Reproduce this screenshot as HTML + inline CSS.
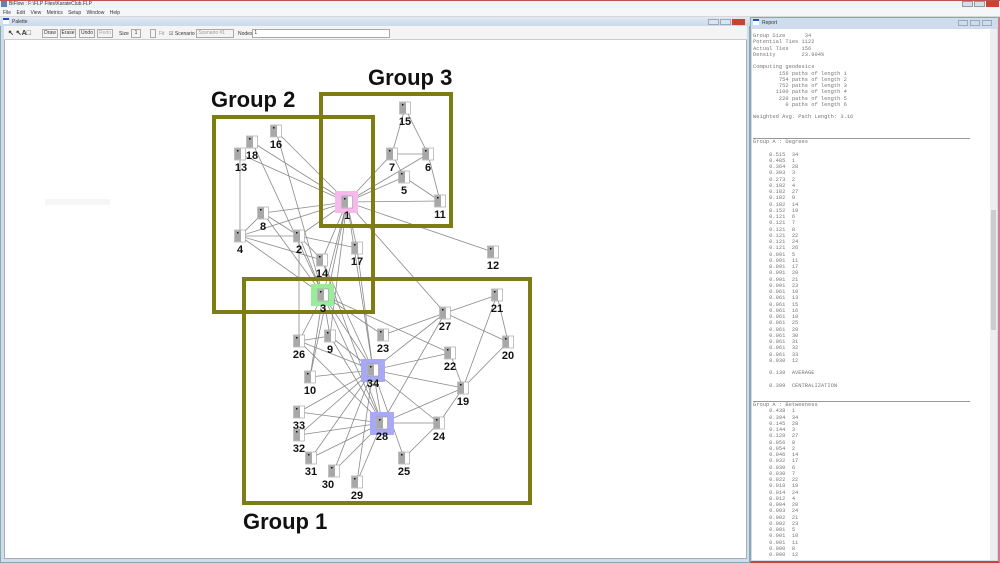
<!DOCTYPE html>
<html><head><meta charset="utf-8"><style>
*{margin:0;padding:0;box-sizing:border-box}
body{width:1000px;height:563px;overflow:hidden;background:#fff;font-family:"Liberation Sans",sans-serif;position:relative}
.abs{position:absolute}
pre{font-family:"Liberation Mono",monospace;font-size:5.4px;line-height:6.25px;color:#777;position:absolute}
.tb{font-size:5px;color:#333}
.btn{position:absolute;top:29px;height:9px;border:1px solid #aaa;background:#f4f4f4;font-size:5px;line-height:7px;text-align:center;color:#333}
</style></head><body>
<div class="abs" style="left:0;top:0;width:1000px;height:8px;background:#f0f2f6;border-top:1px solid #c05050"></div>
<div class="abs" style="left:1px;top:1px;width:6px;height:6px;background:#6a7fb0"></div>
<div class="abs tb" style="left:9px;top:1px">BiFlow : F:\FLP Files\KarateClub.FLP</div>
<div class="abs" style="left:962px;top:1px;width:11px;height:6px;background:#d8dde8;border:1px solid #999"></div>
<div class="abs" style="left:974px;top:1px;width:11px;height:6px;background:#d8dde8;border:1px solid #999"></div>
<div class="abs" style="left:986px;top:1px;width:13px;height:6px;background:#d04030"></div>
<div class="abs" style="left:0;top:8px;width:1000px;height:9px;background:#f5f6f8;border-bottom:1px solid #d8d8d8"></div>
<div class="abs tb" style="left:3px;top:10px;word-spacing:4px">File Edit View Metrics Setup Window Help</div>
<div class="abs" style="left:0;top:17px;width:750px;height:546px;background:#cfdcee;border:1px solid #8aa"></div>
<div class="abs" style="left:0;top:17px;width:750px;height:9px;background:linear-gradient(#dfe8f4,#cbd9ec)"></div>
<div class="abs" style="left:3px;top:18px;width:6px;height:6px;background:#fff;border-top:2px solid #2050c0"></div>
<div class="abs tb" style="left:12px;top:19px">Palette</div>
<div class="abs" style="left:708px;top:19px;width:11px;height:6px;background:#dbe3ee;border:1px solid #9ab"></div>
<div class="abs" style="left:720px;top:19px;width:11px;height:6px;background:#dbe3ee;border:1px solid #9ab"></div>
<div class="abs" style="left:732px;top:19px;width:13px;height:6px;background:#d04030"></div>
<div class="abs" style="left:4px;top:26px;width:743px;height:533px;background:#fff;border:1px solid #aab"></div>
<div class="abs" style="left:4px;top:26px;width:743px;height:14px;background:#f4f4f4;border-bottom:1px solid #ccc"></div>
<div class="abs tb" style="left:8px;top:29px;font-size:7px;font-weight:bold">&#x2196; &#x2196;A&#x25A1;</div>
<div class="btn" style="left:42px;width:16px">Draw</div>
<div class="btn" style="left:60px;width:16px">Erase</div>
<div class="btn" style="left:79px;width:16px">Undo</div>
<div class="btn" style="left:97px;width:16px;color:#aaa">Redo</div>
<div class="abs tb" style="left:119px;top:31px">Size</div>
<div class="btn" style="left:131px;width:10px">1</div>
<div class="btn" style="left:150px;width:6px"></div>
<div class="abs tb" style="left:159px;top:31px;color:#999">Fit</div>
<div class="abs tb" style="left:169px;top:31px">&#x2611; Scenario</div>
<div class="btn" style="left:196px;width:38px;text-align:left;color:#999">&nbsp;Scenario #1</div>
<div class="abs tb" style="left:238px;top:31px">Nodes</div>
<div class="btn" style="left:252px;width:138px;background:#fff;text-align:left">&nbsp;1</div>
<div class="abs" style="left:45px;top:199px;width:65px;height:6px;background:#f6f6f6"></div>
<svg class="abs" style="left:0;top:0" width="750" height="563">
<g stroke="#8a8a8a" stroke-width="0.8">
<line x1="405" y1="108" x2="392" y2="154"/><line x1="405" y1="108" x2="428" y2="154"/><line x1="392" y1="154" x2="428" y2="154"/><line x1="392" y1="154" x2="404" y2="177"/><line x1="428" y1="154" x2="440" y2="201"/><line x1="404" y1="177" x2="440" y2="201"/>
<line x1="347" y1="202" x2="392" y2="154"/><line x1="347" y1="202" x2="428" y2="154"/><line x1="347" y1="202" x2="404" y2="177"/><line x1="347" y1="202" x2="440" y2="201"/><line x1="347" y1="202" x2="493" y2="252"/><line x1="347" y1="202" x2="276" y2="131"/><line x1="347" y1="202" x2="252" y2="142"/><line x1="347" y1="202" x2="240" y2="154"/><line x1="347" y1="202" x2="263" y2="213"/><line x1="347" y1="202" x2="240" y2="236"/><line x1="347" y1="202" x2="299" y2="236"/><line x1="347" y1="202" x2="322" y2="260"/><line x1="347" y1="202" x2="323" y2="295"/><line x1="347" y1="202" x2="357" y2="248"/><line x1="347" y1="202" x2="445" y2="313"/><line x1="347" y1="202" x2="330" y2="336"/><line x1="347" y1="202" x2="373" y2="370"/><line x1="347" y1="202" x2="310" y2="377"/>
<line x1="240" y1="154" x2="240" y2="236"/><line x1="240" y1="236" x2="263" y2="213"/><line x1="240" y1="236" x2="299" y2="236"/><line x1="240" y1="236" x2="322" y2="260"/><line x1="240" y1="236" x2="323" y2="295"/><line x1="263" y1="213" x2="299" y2="236"/><line x1="263" y1="213" x2="323" y2="295"/><line x1="252" y1="142" x2="323" y2="295"/><line x1="276" y1="131" x2="323" y2="295"/><line x1="299" y1="236" x2="357" y2="248"/><line x1="299" y1="236" x2="322" y2="260"/><line x1="299" y1="236" x2="299" y2="341"/><line x1="299" y1="236" x2="323" y2="295"/><line x1="357" y1="248" x2="373" y2="370"/><line x1="322" y1="260" x2="373" y2="370"/><line x1="322" y1="260" x2="382" y2="423"/>
<line x1="323" y1="295" x2="330" y2="336"/><line x1="323" y1="295" x2="373" y2="370"/><line x1="323" y1="295" x2="382" y2="423"/><line x1="323" y1="295" x2="450" y2="353"/><line x1="323" y1="295" x2="383" y2="335"/><line x1="323" y1="295" x2="310" y2="377"/><line x1="323" y1="295" x2="299" y2="341"/>
<line x1="445" y1="313" x2="497" y2="295"/><line x1="445" y1="313" x2="508" y2="342"/><line x1="445" y1="313" x2="373" y2="370"/><line x1="445" y1="313" x2="382" y2="423"/><line x1="445" y1="313" x2="383" y2="335"/><line x1="497" y1="295" x2="508" y2="342"/><line x1="497" y1="295" x2="463" y2="388"/><line x1="508" y1="342" x2="463" y2="388"/><line x1="450" y1="353" x2="373" y2="370"/><line x1="450" y1="353" x2="463" y2="388"/><line x1="463" y1="388" x2="373" y2="370"/><line x1="463" y1="388" x2="382" y2="423"/><line x1="463" y1="388" x2="439" y2="423"/><line x1="439" y1="423" x2="404" y2="458"/><line x1="439" y1="423" x2="382" y2="423"/><line x1="373" y1="370" x2="439" y2="423"/>
<line x1="373" y1="370" x2="299" y2="341"/><line x1="373" y1="370" x2="330" y2="336"/><line x1="373" y1="370" x2="310" y2="377"/><line x1="373" y1="370" x2="299" y2="412"/><line x1="373" y1="370" x2="299" y2="435"/><line x1="373" y1="370" x2="311" y2="458"/><line x1="373" y1="370" x2="334" y2="471"/><line x1="373" y1="370" x2="357" y2="482"/><line x1="373" y1="370" x2="382" y2="423"/><line x1="373" y1="370" x2="404" y2="458"/>
<line x1="382" y1="423" x2="299" y2="412"/><line x1="382" y1="423" x2="299" y2="435"/><line x1="382" y1="423" x2="311" y2="458"/><line x1="382" y1="423" x2="334" y2="471"/><line x1="382" y1="423" x2="330" y2="336"/><line x1="382" y1="423" x2="299" y2="341"/><line x1="382" y1="423" x2="357" y2="482"/><line x1="299" y1="341" x2="330" y2="336"/>
</g>
<g fill="none" stroke="#7d7d14" stroke-width="4">
<rect x="214" y="117" width="159" height="195"/>
<rect x="321" y="94" width="130" height="132"/>
<rect x="244" y="279" width="286" height="224"/>
</g>
<g font-family="Liberation Sans" font-weight="bold" font-size="22" fill="#111">
<text x="211" y="107">Group 2</text><text x="368" y="85">Group 3</text><text x="243" y="529">Group 1</text>
</g>
<rect x="335" y="191" width="23" height="22" fill="#f7b8ee"/>
<rect x="311" y="284" width="23" height="22" fill="#98ee98"/>
<rect x="361" y="359" width="24" height="23" fill="#a8a8f4"/>
<rect x="370" y="412" width="24" height="23" fill="#a8a8f4"/>
<g id="nodes" font-family="Liberation Sans" font-weight="bold" font-size="11" fill="#111" text-anchor="middle"></g>
</svg>
<script>
var N=[[1,347,202],[15,405,108],[7,392,154],[6,428,154],[5,404,177],[11,440,201],[16,276,131],[18,252,142],[13,240,154],[8,263,213],[4,240,236],[2,299,236],[17,357,248],[14,322,260],[12,493,252],[3,323,295],[21,497,295],[27,445,313],[26,299,341],[9,330,336],[23,383,335],[20,508,342],[22,450,353],[34,373,370],[10,310,377],[19,463,388],[33,299,412],[28,382,423],[24,439,423],[32,299,435],[31,311,458],[30,334,471],[25,404,458],[29,357,482]];
var g=document.getElementById('nodes'),s='';
var lbl={13:[1,0],30:[-6,0]};
N.forEach(function(n){var x=n[1],y=n[2];
s+='<rect x="'+(x-5.5)+'" y="'+(y-6)+'" width="11" height="12" fill="#fff" stroke="#999" stroke-width="0.6"/><rect x="'+(x-5)+'" y="'+(y-5.5)+'" width="6" height="11" fill="#a8a8a8"/><rect x="'+(x-3)+'" y="'+(y-4)+'" width="1.5" height="1.5" fill="#111"/>';
var d=lbl[n[0]]||[0,0];
s+='<text x="'+(x+d[0])+'" y="'+(y+17+d[1])+'">'+n[0]+'</text>';});
g.innerHTML=s;
</script>
<div class="abs" style="left:750px;top:17px;width:250px;height:546px;background:#cfdcee;border:1px solid #8aa;border-right:2px solid #d87a8a;border-bottom:2px solid #d04040"></div>
<div class="abs" style="left:753px;top:19px;width:6px;height:6px;background:#fff;border-top:2px solid #2050c0"></div>
<div class="abs tb" style="left:762px;top:20px">Report</div>
<div class="abs" style="left:958px;top:20px;width:10px;height:6px;border:1px solid #9ab"></div>
<div class="abs" style="left:970px;top:20px;width:10px;height:6px;border:1px solid #9ab"></div>
<div class="abs" style="left:982px;top:20px;width:10px;height:6px;border:1px solid #9ab"></div>
<div class="abs" style="left:752px;top:29px;width:245px;height:531px;background:#fff"></div>
<div class="abs" style="left:990px;top:29px;width:7px;height:531px;background:#eee"></div>
<div class="abs" style="left:991px;top:210px;width:5px;height:120px;background:#ccc"></div>
<div class="abs" style="left:753px;top:138px;width:217px;height:1px;background:#999"></div>
<div class="abs" style="left:753px;top:401px;width:217px;height:1px;background:#999"></div>
<pre style="left:753px;top:33px">Group Size      34
Potential Ties 1122
Actual Ties    156
Density        23.904%

Computing geodesics
        156 paths of length 1
        754 paths of length 2
        752 paths of length 3
       1100 paths of length 4
        220 paths of length 5
          0 paths of length 6

Weighted Avg. Path Length: 3.16</pre>
<pre style="left:753px;top:139px">Group A : Degrees

     0.515  34
     0.485  1
     0.364  28
     0.303  3
     0.273  2
     0.182  4
     0.182  27
     0.182  9
     0.182  14
     0.152  19
     0.121  6
     0.121  7
     0.121  8
     0.121  22
     0.121  24
     0.121  26
     0.091  5
     0.091  11
     0.091  17
     0.091  20
     0.091  21
     0.091  23
     0.061  10
     0.061  13
     0.061  15
     0.061  16
     0.061  18
     0.061  25
     0.061  29
     0.061  30
     0.061  31
     0.061  32
     0.061  33
     0.030  12

     0.139  AVERAGE

     0.399  CENTRALIZATION</pre>
<pre style="left:753px;top:402px">Group A : Betweeness
     0.438  1
     0.304  34
     0.145  28
     0.144  3
     0.128  27
     0.056  9
     0.054  2
     0.046  14
     0.032  17
     0.030  6
     0.030  7
     0.022  22
     0.018  19
     0.014  24
     0.012  4
     0.004  20
     0.003  24
     0.002  21
     0.002  23
     0.001  5
     0.001  10
     0.001  11
     0.000  8
     0.000  12</pre>
</body></html>
